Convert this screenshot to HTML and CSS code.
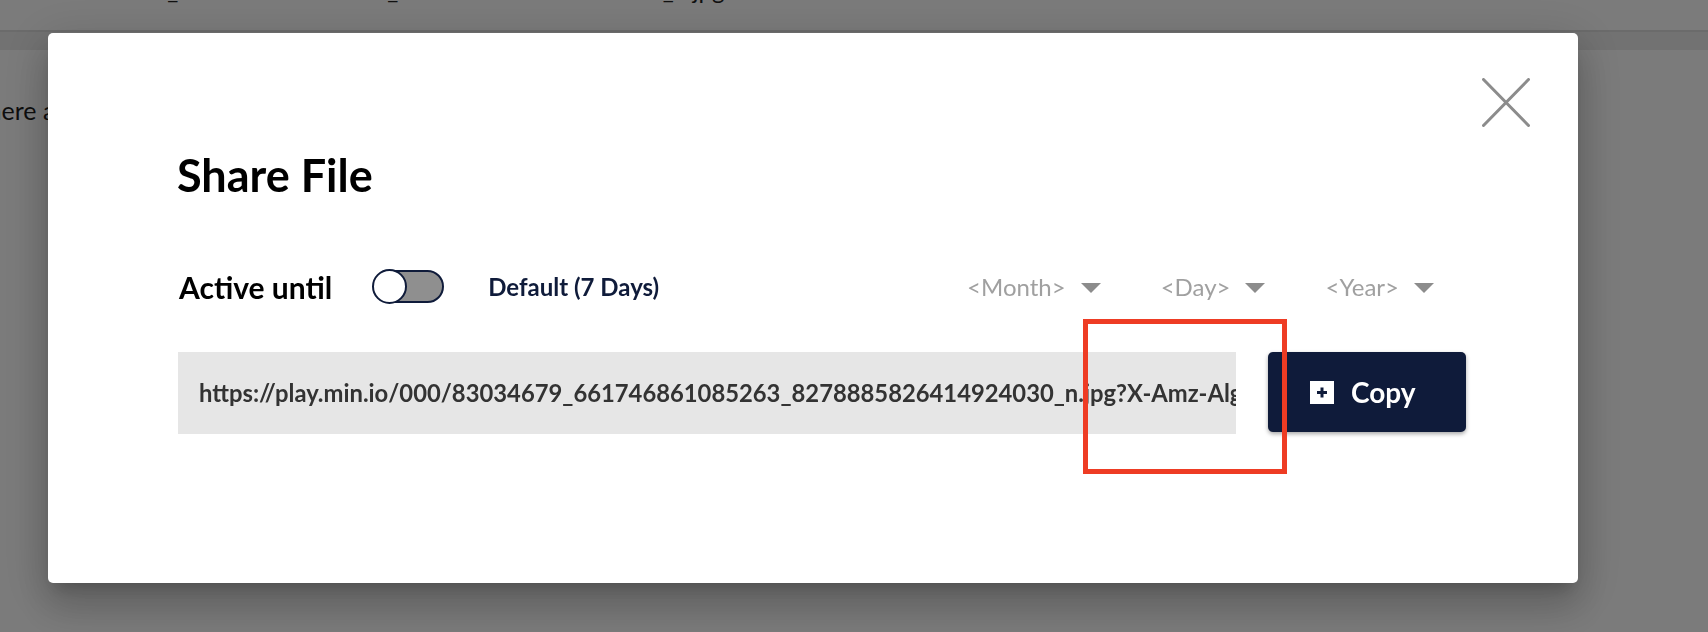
FILE: index.html
```html
<!DOCTYPE html>
<html>
<head>
<meta charset="utf-8">
<link rel="stylesheet" href="styles.css">
</head>
<body>
<div class="page">
  <div class="topbar"><span class="crumb">83034679_661746861085263_8278885826414924030_n.jpg</span></div>
  <div class="subbar"></div>
  <div class="content"><p class="lead">There are no objects</p></div>
</div>

<div class="backdrop">
  <div class="modal">
    <svg class="close" width="48" height="49" viewBox="0 0 48 49">
      <path d="M1.5 1.5 L46.5 47.5 M46.5 1.5 L1.5 47.5" stroke="#8c8c8c" stroke-width="3" stroke-linecap="round" fill="none"/>
    </svg>
    <h1 class="title">Share File</h1>
    <div class="row-active">
      <span class="active-label">Active until</span>
      <span class="toggle"><span class="track"></span><span class="knob"></span></span>
      <span class="default-label">Default (7 Days)</span>
      <div class="dates">
        <span class="select">&lt;Month&gt;<span class="caret"></span></span>
        <span class="select">&lt;Day&gt;<span class="caret"></span></span>
        <span class="select">&lt;Year&gt;<span class="caret"></span></span>
      </div>
    </div>
    <div class="row-link">
      <div class="link-box"><span class="link-text">https://play.min.io/000/83034679_661746861085263_8278885826414924030_n.jpg?X-Amz-Algorithm=AWS4-HMAC-SHA256&amp;X-Amz-Credential=Q3AM3UQ867SPQQA43P2F</span></div>
      <button class="copy-btn">
        <svg class="copy-icon" width="24" height="23" viewBox="0 0 24 23"><rect width="24" height="23" fill="#ffffff"/><path d="M12 6.5 V16.5 M7 11.5 H17" stroke="#0f1b3a" stroke-width="3"/></svg>
        <span>Copy</span>
      </button>
    </div>
  </div>
</div>

<div class="highlight"></div>
</body>
</html>
```

FILE: styles.css
```css
html, body {
  margin: 0;
  padding: 0;
}

body {
  width: 1708px;
  height: 632px;
  overflow: hidden;
  background: #f6f6f6;
  font-family: Lato, "Noto Sans", sans-serif;
}

.page {
  display: flex;
  flex-direction: column;
}

.topbar {
  height: 30px;
  background: #f6f6f6;
  border-bottom: 2px solid #d6d6d6;
  overflow: hidden;
  padding-left: 56px;
}

.crumb {
  display: block;
  margin-top: -25px;
  font-size: 24px;
  line-height: 29px;
  color: #222;
}

.subbar {
  height: 18px;
  background: #e4e4e4;
}

.lead {
  margin: 45px 0 0 -27px;
  font-size: 25px;
  color: #1c1c1c;
  font-family: "Source Sans Pro", Lato, sans-serif;
}

.backdrop {
  position: fixed;
  inset: 0;
  background: rgba(0, 0, 0, 0.5);
  display: flex;
  align-items: flex-start;
  padding: 33px 0 0 48px;
}

.modal {
  width: 1530px;
  height: 550px;
  box-sizing: border-box;
  background: #fff;
  border-radius: 5px;
  box-shadow: 0px 11px 15px -7px rgba(0,0,0,0.2), 0px 24px 38px 3px rgba(0,0,0,0.14), 0px 9px 46px 8px rgba(0,0,0,0.12);
  display: flex;
  flex-direction: column;
  padding: 45px 48px 0 130px;
}

.close {
  align-self: flex-end;
  display: block;
}

.title {
  margin: 21px 0 0 -1px;
  font-size: 45px;
  line-height: 1.2;
  font-weight: 700;
  color: #000;
}

.row-active {
  margin-top: 67px;
  height: 35px;
  display: flex;
  align-items: center;
  width: 1288px;
}

.active-label {
  font-size: 30px;
  font-weight: 700;
  color: #000;
  margin-left: 1px;
}

.toggle {
  position: relative;
  width: 72px;
  height: 35px;
  margin-left: 40px;
  flex: none;
}

.track {
  position: absolute;
  left: 4px;
  top: 1px;
  width: 68px;
  height: 33px;
  box-sizing: border-box;
  border: 2px solid #0f1b3a;
  border-radius: 17px;
  background: #8f8f8f;
}

.knob {
  position: absolute;
  left: 0;
  top: 0;
  width: 35px;
  height: 35px;
  box-sizing: border-box;
  border: 2px solid #0f1b3a;
  border-radius: 50%;
  background: #fff;
}

.default-label {
  margin-left: 44px;
  font-size: 24px;
  font-weight: 700;
  color: #0f1b3a;
}

.dates {
  margin-left: auto;
  padding-right: 32px;
  display: flex;
  align-items: center;
  gap: 60px;
}

.select {
  display: flex;
  align-items: center;
  gap: 15px;
  font-size: 24px;
  font-weight: 400;
  color: #a0a0a0;
}

.caret {
  width: 0;
  height: 0;
  border-left: 10px solid transparent;
  border-right: 10px solid transparent;
  border-top: 10px solid #8c8c8c;
  margin-top: 2px;
}

.row-link {
  margin-top: 48px;
  display: flex;
  align-items: flex-start;
  gap: 32px;
}

.link-box {
  width: 1058px;
  height: 82px;
  background: #e6e6e6;
  box-sizing: border-box;
  padding-left: 21px;
  display: flex;
  align-items: center;
  overflow: hidden;
  white-space: nowrap;
}

.link-text {
  font-size: 23.8px;
  font-weight: 700;
  color: #333;
}

.copy-btn {
  width: 198px;
  height: 80px;
  border: none;
  border-radius: 5px;
  background: #0f1b3a;
  box-shadow: 0 2px 4px rgba(0,0,0,0.35);
  display: flex;
  align-items: center;
  padding: 0 0 0 42px;
  gap: 17px;
  font-family: Lato, sans-serif;
  font-size: 28px;
  font-weight: 700;
  color: #fff;
  cursor: pointer;
}

.copy-icon {
  display: block;
  flex: none;
}

.highlight {
  position: fixed;
  left: 1083px;
  top: 319px;
  width: 204px;
  height: 155px;
  box-sizing: border-box;
  border: 5px solid #ee3c24;
}
```
